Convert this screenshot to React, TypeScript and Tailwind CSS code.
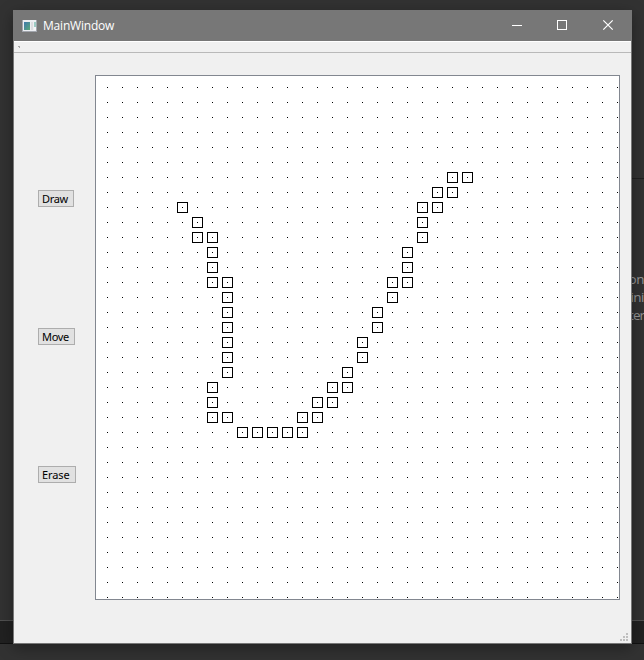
const CELLS: [number, number][] = [
  [5, 8], [6, 9], [6, 10], [7, 10], [7, 11], [7, 12], [7, 13], [8, 13], [8, 14], [8, 15], [8, 16],
  [8, 17], [8, 18], [8, 19], [7, 20], [7, 21], [7, 22], [8, 22], [9, 23], [10, 23], [11, 23],
  [12, 23], [13, 23], [13, 22], [14, 22], [14, 21], [15, 21], [15, 20], [16, 20], [16, 19],
  [17, 18], [17, 17], [18, 16], [18, 15], [19, 14], [19, 13], [20, 13], [20, 12], [20, 11],
  [21, 10], [21, 9], [21, 8], [22, 8], [22, 7], [23, 7], [23, 6], [24, 6],
];

const STEPS = Array.from({ length: 35 }, (_, i) => i);

function AppIcon() {
  return (
    <svg width="16" height="14" viewBox="0 0 16 14" shapeRendering="crispEdges">
      <defs>
        <linearGradient id="pane" x1="0" y1="0" x2="1" y2="1">
          <stop offset="0" stopColor="#3f78ad" />
          <stop offset="1" stopColor="#58a878" />
        </linearGradient>
      </defs>
      <rect x="0" y="1" width="15" height="12" fill="#a2a6ad" />
      <rect x="1" y="1" width="13" height="11" fill="#eceef2" />
      <rect x="2" y="3" width="6" height="8" fill="url(#pane)" />
      <rect x="9" y="3" width="2" height="8" fill="#dcdce0" />
      <rect x="12" y="3" width="2" height="5" fill="#9ccbc4" />
      <rect x="12" y="8" width="2" height="3" fill="#f5f5f8" />
    </svg>
  );
}

function TitleBar() {
  return (
    <header className="flex h-[30px] shrink-0 items-center bg-[#777777] pl-2 text-white">
      <AppIcon />
      <span className="ml-[5px] grow font-['Open_Sans',sans-serif] text-[12px] leading-4 tracking-[-0.2px]">MainWindow</span>
      <svg width="138" height="30" viewBox="0 0 138 30" fill="none" stroke="#fff">
        <path d="M19 14.5h10" />
        <rect x="64.5" y="9.5" width="9" height="9" />
        <path d="M110.3 9.3l9.4 9.4M119.7 9.3l-9.4 9.4" strokeWidth="1.2" />
      </svg>
    </header>
  );
}

function ToolButton({ label, className }: { label: string; className: string }) {
  return (
    <button
      className={`flex h-[17px] items-center border border-[#adadad] bg-[#e1e1e1] pl-[3px] font-['Noto_Sans',sans-serif] text-[11px] leading-none text-black ${className}`}
    >
      {label}
    </button>
  );
}

function GridCanvas() {
  return (
    <div className="h-[525px] w-[525px] border border-[#828790] bg-white">
      <svg width="523" height="523" viewBox="96 76 523 523" shapeRendering="crispEdges">
        {STEPS.map((r) =>
          STEPS.map((c) => <rect key={`${r}-${c}`} x={107 + c * 15} y={87 + r * 15} width="1" height="1" />),
        )}
        {CELLS.map(([c, r]) => (
          <rect
            key={`${c},${r}`}
            x={102.5 + c * 15}
            y={82.5 + r * 15}
            width="10"
            height="10"
            fill="none"
            stroke="#000"
          />
        ))}
      </svg>
    </div>
  );
}

function SizeGrip() {
  return (
    <svg className="absolute right-[3px] bottom-[2px]" width="8" height="8" viewBox="0 0 8 8" fill="#bfbfbf" shapeRendering="crispEdges">
      <path d="M6 0h2v2h-2zM3 3h2v2h-2zM6 3h2v2h-2zM0 6h2v2h-2zM3 6h2v2h-2zM6 6h2v2h-2z" />
    </svg>
  );
}

export default function App() {
  return (
    <div className="relative h-[660px] w-[644px] overflow-hidden bg-[#323232]">
      <div className="flex h-full flex-col">
        <div className="ml-[620px] box-content h-[178px] shrink-0 border-b border-[#202020]" />
        <div className="flex h-[441px] shrink-0 flex-col items-end pt-[91px] font-['Open_Sans',sans-serif] text-[13.5px] leading-[18px] tracking-[-0.5px] text-[#979797]">
          <div>on</div>
          <div>ini</div>
          <div className="tracking-[-1px]">ter</div>
        </div>
        <div className="h-[24px] shrink-0 border-t border-b border-t-[#505050] border-b-[#111111] bg-[#212121]" />
      </div>
      <main className="absolute top-[10px] left-[13px] flex h-[634px] w-[619px] flex-col border border-[#777777] bg-[#f0f0f0] shadow-[0_4px_14px_rgba(0,0,0,0.35)]">
        <TitleBar />
        <div className="h-3 shrink-0 border-t border-b border-t-white border-b-[#b9b9b9] pt-1 pl-1">
          <div className="h-[2px] w-[2px] border-t border-r border-[#a8a8a8]" />
        </div>
        <div className="flex">
          <nav className="flex w-[81px] flex-col items-start pt-[137px] pl-6">
            <ToolButton label="Draw" className="w-9 tracking-[-0.3px]" />
            <ToolButton label="Move" className="mt-[121px] w-[37px] tracking-[-0.3px]" />
            <ToolButton label="Erase" className="mt-[121px] w-[38px] tracking-[-0.1px]" />
          </nav>
          <section className="pt-[22px]">
            <GridCanvas />
          </section>
        </div>
        <SizeGrip />
      </main>
    </div>
  );
}
